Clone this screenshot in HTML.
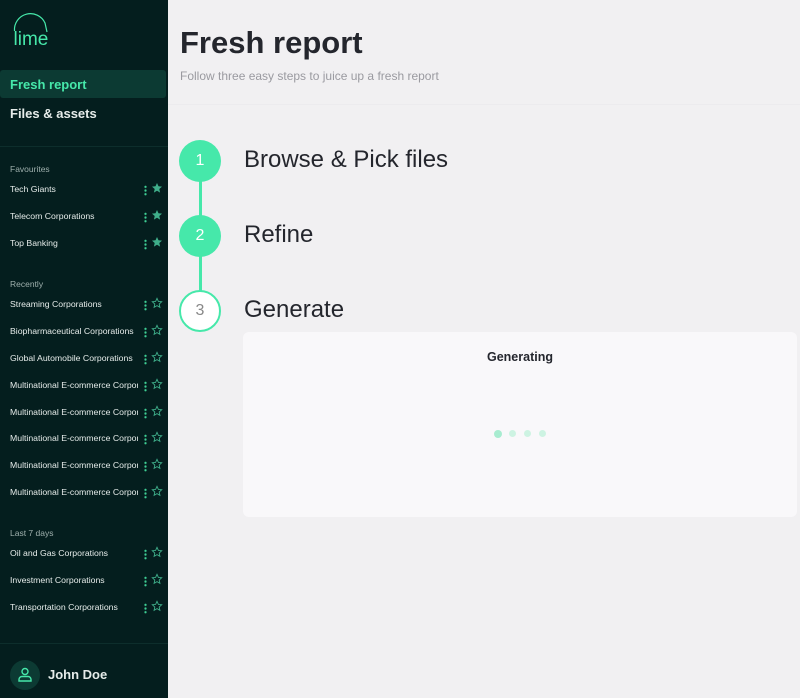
<!DOCTYPE html>
<html><head><style>
*{margin:0;padding:0;box-sizing:border-box}
body{width:800px;height:698px;overflow:hidden;font-family:"Liberation Sans",sans-serif;background:#f1f0f2;position:relative}
.sb{position:absolute;left:0;top:0;width:168px;height:698px;background:#041e1e;color:#e6ecea}
.nav{position:absolute;left:0;width:166px;height:28px;font-size:13px;font-weight:bold;padding:7px 10px}
.lbl{position:absolute;left:10px;font-size:8.5px;color:#9fb0ad}
.it{position:absolute;left:10px;width:155px;height:12px;font-size:8.7px;color:#e6ecea;white-space:nowrap}
.it span.t{display:inline-block;width:128px;overflow:hidden}
.dots{position:absolute;left:134px;top:1px;width:3px;height:11px;background:radial-gradient(circle,#3ecf94 1px,transparent 1.3px) 0 0/3px 3.7px repeat-y}
.st{position:absolute;left:141px;top:-2px}
.hr{position:absolute;left:0;width:168px;height:1px;background:#0d2e2c}
.circ{position:absolute;left:179px;width:42px;height:42px;border-radius:50%;background:#46e8aa;color:#fff;font-size:16px;text-align:center;line-height:42px}
.step{position:absolute;left:244px;font-size:24px;color:#24262d}
</style></head><body>
<svg width="0" height="0" style="position:absolute"><defs>
<symbol id="sf" viewBox="0 0 12 12"><path d="M6 1 L7.5 4.3 L11 4.6 L8.3 7 L9.1 10.6 L6 8.7 L2.9 10.6 L3.7 7 L1 4.6 L4.5 4.3 Z" fill="#3fae8a"/></symbol>
<symbol id="so" viewBox="0 0 12 12"><path d="M6 1.3 L7.4 4.4 L10.7 4.7 L8.2 7 L8.9 10.3 L6 8.6 L3.1 10.3 L3.8 7 L1.3 4.7 L4.6 4.4 Z" fill="none" stroke="#3fae8a" stroke-width="0.9"/></symbol>
</defs></svg>
<div class="sb">
<svg style="position:absolute;left:10px;top:10px" width="44" height="40" viewBox="0 0 44 40"><path d="M4.5 21 A16 16 0 0 1 35 13 L37 22" fill="none" stroke="#46e8aa" stroke-width="1.2"/><text x="3.5" y="35" font-size="19" fill="#46e8aa" font-family="Liberation Sans">lime</text></svg>
<div class="nav" style="top:70px;background:#0c3a33;color:#46e8aa;border-radius:3px">Fresh report</div>
<div class="nav" style="top:99px">Files &amp; assets</div>
<div class="hr" style="top:146px"></div>
<div class="lbl" style="top:164px">Favourites</div>
<div class="it" style="top:184px"><span class="t">Tech Giants</span><span class="dots"></span><svg class="st" width="12" height="12"><use href="#sf"/></svg></div>
<div class="it" style="top:211px"><span class="t">Telecom Corporations</span><span class="dots"></span><svg class="st" width="12" height="12"><use href="#sf"/></svg></div>
<div class="it" style="top:238px"><span class="t">Top Banking</span><span class="dots"></span><svg class="st" width="12" height="12"><use href="#sf"/></svg></div>
<div class="lbl" style="top:279px">Recently</div>
<div class="it" style="top:299px"><span class="t">Streaming Corporations</span><span class="dots"></span><svg class="st" width="12" height="12"><use href="#so"/></svg></div>
<div class="it" style="top:326px"><span class="t">Biopharmaceutical Corporations</span><span class="dots"></span><svg class="st" width="12" height="12"><use href="#so"/></svg></div>
<div class="it" style="top:353px"><span class="t">Global Automobile Corporations</span><span class="dots"></span><svg class="st" width="12" height="12"><use href="#so"/></svg></div>
<div class="it" style="top:380px"><span class="t">Multinational E-commerce Corporations</span><span class="dots"></span><svg class="st" width="12" height="12"><use href="#so"/></svg></div>
<div class="it" style="top:407px"><span class="t">Multinational E-commerce Corporations</span><span class="dots"></span><svg class="st" width="12" height="12"><use href="#so"/></svg></div>
<div class="it" style="top:433px"><span class="t">Multinational E-commerce Corporations</span><span class="dots"></span><svg class="st" width="12" height="12"><use href="#so"/></svg></div>
<div class="it" style="top:460px"><span class="t">Multinational E-commerce Corporations</span><span class="dots"></span><svg class="st" width="12" height="12"><use href="#so"/></svg></div>
<div class="it" style="top:487px"><span class="t">Multinational E-commerce Corporations</span><span class="dots"></span><svg class="st" width="12" height="12"><use href="#so"/></svg></div>
<div class="lbl" style="top:528px">Last 7 days</div>
<div class="it" style="top:548px"><span class="t">Oil and Gas Corporations</span><span class="dots"></span><svg class="st" width="12" height="12"><use href="#so"/></svg></div>
<div class="it" style="top:575px"><span class="t">Investment Corporations</span><span class="dots"></span><svg class="st" width="12" height="12"><use href="#so"/></svg></div>
<div class="it" style="top:602px"><span class="t">Transportation Corporations</span><span class="dots"></span><svg class="st" width="12" height="12"><use href="#so"/></svg></div>
<div class="hr" style="top:643px"></div>
<div style="position:absolute;left:10px;top:660px;width:30px;height:30px;border-radius:50%;background:#0c3a33">
<svg width="30" height="30" viewBox="0 0 30 30"><circle cx="15" cy="11.5" r="3" fill="none" stroke="#46e8aa" stroke-width="1.4"/><path d="M9 21 v-1.5 a3 3 0 0 1 3 -3 h6 a3 3 0 0 1 3 3 V21 Z" fill="none" stroke="#46e8aa" stroke-width="1.4"/></svg></div>
<div style="position:absolute;left:48px;top:667px;font-size:13px;font-weight:bold">John Doe</div>
</div>
<div style="position:absolute;left:180px;top:25px;font-size:31px;font-weight:bold;color:#24262d">Fresh report</div>
<div style="position:absolute;left:180px;top:69px;font-size:12px;color:#9a9aa0">Follow three easy steps to juice up a fresh report</div>
<div style="position:absolute;left:168px;top:104px;width:632px;height:1px;background:#ecebee"></div>
<div style="position:absolute;left:199px;top:170px;width:3px;height:130px;background:#46e8aa"></div>
<div class="circ" style="top:140px">1</div>
<div class="circ" style="top:215px">2</div>
<div class="circ" style="top:290px;background:#fff;border:2px solid #46e8aa;color:#888;line-height:38px">3</div>
<div class="step" style="top:146px">Browse &amp; Pick files</div>
<div class="step" style="top:221px">Refine</div>
<div class="step" style="top:296px">Generate</div>
<div style="position:absolute;left:243px;top:332px;width:554px;height:185px;background:#f9f8fa;border-radius:6px">
<div style="position:absolute;left:0;width:554px;top:18px;text-align:center;font-size:12.5px;font-weight:bold;color:#24262d">Generating</div>
<div style="position:absolute;left:251px;top:98px;width:8px;height:8px;border-radius:50%;background:#a8ecd0"></div>
<div style="position:absolute;left:266px;top:98px;width:7px;height:7px;border-radius:50%;background:#cdf3e2"></div>
<div style="position:absolute;left:281px;top:98px;width:7px;height:7px;border-radius:50%;background:#cdf3e2"></div>
<div style="position:absolute;left:296px;top:98px;width:7px;height:7px;border-radius:50%;background:#cdf3e2"></div>
</div>
</body></html>
